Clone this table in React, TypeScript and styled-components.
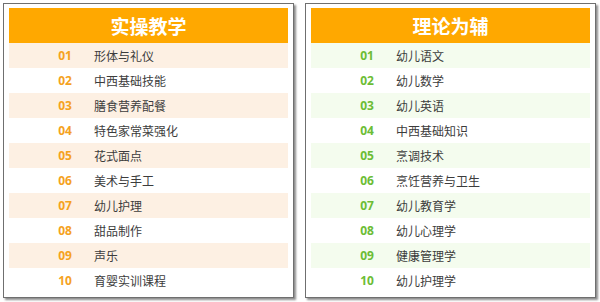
import styled, { createGlobalStyle } from "styled-components";

const GlobalStyle = createGlobalStyle`
  html, body {
    margin: 0;
    padding: 0;
    background: #ffffff;
  }
  body {
    font-family: "Open Sans", "Noto Sans CJK SC", sans-serif;
  }
`;

interface Theme {
  title: string;
  num: string;
  stripe: string;
  items: string[];
}

const panels: Theme[] = [
  {
    title: "实操教学",
    num: "#f5a21e",
    stripe: "#fdf0e3",
    items: [
      "形体与礼仪",
      "中西基础技能",
      "膳食营养配餐",
      "特色家常菜强化",
      "花式面点",
      "美术与手工",
      "幼儿护理",
      "甜品制作",
      "声乐",
      "育婴实训课程",
    ],
  },
  {
    title: "理论为辅",
    num: "#6cbd35",
    stripe: "#f4fcee",
    items: [
      "幼儿语文",
      "幼儿数学",
      "幼儿英语",
      "中西基础知识",
      "烹调技术",
      "烹饪营养与卫生",
      "幼儿教育学",
      "幼儿心理学",
      "健康管理学",
      "幼儿护理学",
    ],
  },
];

const App = () => {
  return (
    <>
      <GlobalStyle />
      <Page>
        {panels.map((p) => (
          <Panel key={p.title}>
            <Header>{p.title}</Header>
            <ul>
              {p.items.map((item, i) => (
                <Row key={item} $stripe={i % 2 === 0 ? p.stripe : "#ffffff"}>
                  <Num $color={p.num}>{String(i + 1).padStart(2, "0")}</Num>
                  <Label>{item}</Label>
                </Row>
              ))}
            </ul>
          </Panel>
        ))}
      </Page>
    </>
  );
};

export default App;

const Page = styled.div`
  display: flex;
  gap: 11px;
  padding: 3px 0 0 3px;
  width: 600px;
  height: 302px;
  box-sizing: border-box;

  ul {
    list-style: none;
    margin: 0;
    padding: 0;
  }
`;

const Panel = styled.div`
  width: 291px;
  height: 295px;
  box-sizing: border-box;
  border: 1px solid #6f6f6f;
  padding: 4px 5px 3px;
  background: #ffffff;
  box-shadow: 2px 2px 2px rgba(0, 0, 0, 0.45);
`;

const Header = styled.div`
  height: 35px;
  background: #ffa800;
  color: #ffffff;
  font-family: "Noto Sans CJK SC", sans-serif;
  font-weight: 700;
  font-size: 19px;
  display: flex;
  align-items: center;
  justify-content: center;
`;

const Row = styled.li<{ $stripe: string }>`
  height: 25px;
  display: flex;
  align-items: center;
  background: ${(p) => p.$stripe};
  padding-left: 42px;
`;

const Num = styled.span<{ $color: string }>`
  width: 28px;
  text-align: center;
  color: ${(p) => p.$color};
  font-family: "Open Sans", sans-serif;
  font-weight: 700;
  font-size: 12px;
`;

const Label = styled.span`
  margin-left: 15px;
  color: #3c3c3c;
  font-family: "Noto Sans CJK SC", sans-serif;
  font-size: 12px;
`;
